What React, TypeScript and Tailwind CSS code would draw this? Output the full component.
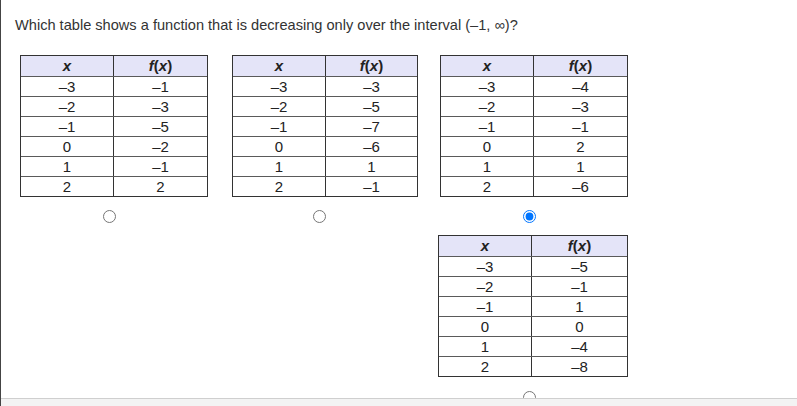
import React from "react";

type T = { xs: string[]; fs: string[] };

const XS = ["–3", "–2", "–1", "0", "1", "2"];

const tables: T[] = [
  { xs: XS, fs: ["–1", "–3", "–5", "–2", "–1", "2"] },
  { xs: XS, fs: ["–3", "–5", "–7", "–6", "1", "–1"] },
  { xs: XS, fs: ["–4", "–3", "–1", "2", "1", "–6"] },
  { xs: XS, fs: ["–5", "–1", "1", "0", "–4", "–8"] },
];

function Table({ t, w }: { t: T; w: string }) {
  return (
    <div className={`${w} border border-[#333] text-[15px] leading-[16px] text-[#222]`}>
      <div className="flex h-[20px] bg-[#e4e4f8]">
        <div className="flex w-[93px] items-center justify-center border-r-[1px] border-[#333] font-bold italic">
          x
        </div>
        <div className="flex flex-1 items-center justify-center font-bold">
          <i>f</i>(<i>x</i>)
        </div>
      </div>
      {t.xs.map((x, i) => (
        <div key={i} className="flex h-[20px] border-t border-[#5a5a5a]">
          <div className="flex w-[93px] items-center justify-center border-r-[1px] border-[#333]">
            {x}
          </div>
          <div className="flex flex-1 items-center justify-center">{t.fs[i]}</div>
        </div>
      ))}
    </div>
  );
}

function Radio({ checked }: { checked?: boolean }) {
  return (
    <input
      type="radio"
      name="ans"
      defaultChecked={checked}
      className="h-[13px] w-[13px]"
    />
  );
}

export default function App() {
  return (
    <div className="relative h-[406px] w-[797px] overflow-hidden border-l border-[#444] bg-white font-['Liberation_Sans',Arial,sans-serif] text-[#333]">
      <p className="pl-[14px] pt-[16px] text-[14.6px] leading-[19px]">
        Which table shows a function that is decreasing only over the interval (–1, ∞)?
      </p>
      <div className="mt-[20px] flex">
        <div className="ml-[19px]">
          <Table t={tables[0]} w="w-[188px]" />
        </div>
        <div className="ml-[24px]">
          <Table t={tables[1]} w="w-[186px]" />
        </div>
        <div className="ml-[22px]">
          <Table t={tables[2]} w="w-[188px]" />
        </div>
      </div>
      <div className="ml-[3px] mt-[13px] flex">
        <div className="flex w-[210px] justify-center">
          <Radio />
        </div>
        <div className="flex w-[210px] justify-center">
          <Radio />
        </div>
        <div className="flex w-[210px] justify-center">
          <Radio checked />
        </div>
      </div>
      <div className="mt-[12px] flex">
        <div className="ml-[437px]">
          <Table t={tables[3]} w="w-[190px]" />
        </div>
      </div>
      <div className="ml-[3px] mt-[14px] flex">
        <div className="w-[420px]" />
        <div className="flex w-[210px] justify-center">
          <Radio />
        </div>
      </div>
      <div className="absolute bottom-0 left-0 right-0 h-[8px] border-t border-[#cfcfcf] bg-[#f3f3f3]" />
    </div>
  );
}
